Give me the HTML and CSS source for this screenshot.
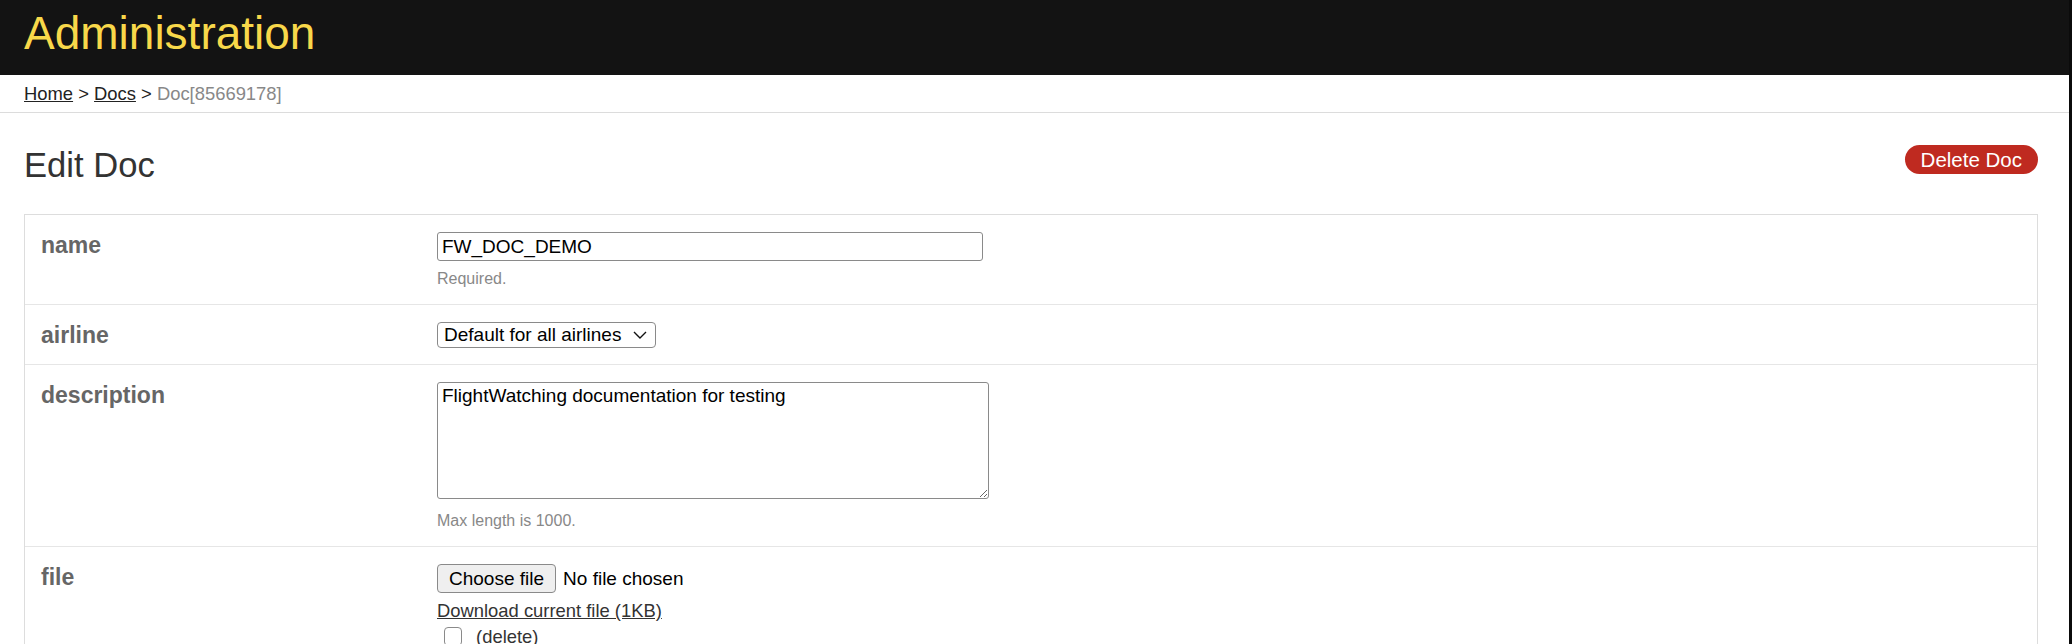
FILE: index.html
```html
<!DOCTYPE html>
<html>
<head>
    <link rel="stylesheet" href="styles.css">
</head>
<body>
    <div class="topbar">Administration</div>

    <div class="crumbs">
        <a href="#">Home</a> &gt; <a href="#">Docs</a> &gt; <span class="current">Doc[85669178]</span>
    </div>

    <div class="page">
        <div class="page-head">
            <h1>Edit Doc</h1>
            <button class="btn-delete">Delete Doc</button>
        </div>

        <form class="form-box">
            <div class="row">
                <label class="field-name" for="name">name</label>
                <div class="field-value">
                    <input type="text" id="name" class="text-input" value="FW_DOC_DEMO">
                    <div class="help">Required.</div>
                </div>
            </div>
            <div class="row">
                <label class="field-name" for="airline">airline</label>
                <div class="field-value">
                    <span class="select-wrap">
                        <select id="airline" class="select-input">
                            <option>Default for all airlines</option>
                        </select>
                        <svg class="chevron" width="14" height="8" viewBox="0 0 14 8"><path d="M1 1 L7 7 L13 1" fill="none" stroke="#111" stroke-width="1.4"/></svg>
                    </span>
                </div>
            </div>
            <div class="row">
                <label class="field-name" for="description">description</label>
                <div class="field-value">
                    <textarea id="description" class="text-area">FlightWatching documentation for testing</textarea>
                    <div class="help help-after-area">Max length is 1000.</div>
                </div>
            </div>
            <div class="row">
                <label class="field-name" for="file">file</label>
                <div class="field-value">
                    <div class="file-line">
                        <input type="file" id="file" class="file-input">
                        <label class="file-btn" for="file">Choose file</label>
                        <span class="file-status">No file chosen</span>
                    </div>
                    <div class="current-file"><a href="#">Download current file (1KB)</a></div>
                    <div class="delete-line"><input type="checkbox" class="check"> (delete)</div>
                </div>
            </div>
        </form>
    </div>
</body>
</html>
```

FILE: styles.css
```css
html {
    background-color: #0b0b0b;
}
body {
    margin: 0 3px 0 0;
    min-height: 100vh;
    background-color: white;
    color: #333;
    font-family: "Liberation Sans", Arial, sans-serif;
    font-size: 18.4px;
}
a {
    color: #222;
}
.topbar {
    background-color: #131313;
    color: #f8d84a;
    font-size: 46px;
    line-height: 46px;
    padding: 10px 24px 19px;
}
.crumbs {
    padding: 6px 24px;
    line-height: 25px;
    border-bottom: 1px solid #dcdcdc;
    color: #222;
}
.crumbs .current {
    color: #888;
}
.page {
    padding: 32px 31px 0 24px;
}
.page-head {
    display: flex;
    justify-content: space-between;
    align-items: flex-start;
    margin-bottom: 29px;
}
h1 {
    margin: 0;
    font-size: 34.6px;
    line-height: 40px;
    font-weight: normal;
    color: #333;
}
.btn-delete {
    background-color: #bf2a20;
    color: white;
    border: none;
    border-radius: 15px;
    height: 29px;
    padding: 0 16px;
    font-family: inherit;
    font-size: 20.5px;
    line-height: 29px;
    cursor: pointer;
}
.form-box {
    border: 1px solid #dddddd;
    border-bottom: none;
}
.row {
    display: grid;
    grid-template-columns: 412px 1fr;
    padding: 17px 0 15px;
    border-top: 1px solid #e6e6e6;
}
.row:first-child {
    border-top: none;
}
.field-name {
    padding-left: 16px;
    font-size: 23px;
    line-height: 27px;
    font-weight: bold;
    color: #666;
}
.text-input,
.select-input,
.text-area {
    display: block;
    box-sizing: border-box;
    font-family: inherit;
    font-size: 19px;
    color: #000;
    border: 1px solid #8a8a8a;
    border-radius: 3px;
    background-color: white;
}
.text-input {
    width: 546px;
    height: 29px;
    padding: 0 4px;
}
.help {
    margin-top: 7px;
    font-size: 16px;
    line-height: 21px;
    color: #888;
}
.help-after-area {
    margin-top: 11px;
}
.select-wrap {
    position: relative;
    display: inline-block;
    vertical-align: top;
}
.select-input {
    appearance: none;
    width: 219px;
    height: 26px;
    padding: 0 30px 0 6px;
    border-radius: 4px;
    line-height: 24px;
}
.chevron {
    position: absolute;
    right: 9px;
    top: 9px;
    pointer-events: none;
}
.text-area {
    width: 552px;
    height: 117px;
    padding: 2px 4px;
    resize: vertical;
    line-height: 22px;
}
.file-line {
    display: flex;
    align-items: center;
    gap: 7px;
    font-size: 19px;
    color: #000;
}
.file-input {
    display: none;
}
.file-btn {
    box-sizing: border-box;
    height: 29px;
    line-height: 27px;
    padding: 0 11px;
    border: 1px solid #8a8a8a;
    border-radius: 4px;
    background-color: #efefef;
    cursor: pointer;
}
.current-file {
    margin-top: 5px;
    line-height: 25px;
}
.current-file a {
    color: #333;
}
.delete-line {
    margin-top: 3px;
    line-height: 22px;
}
.check {
    appearance: none;
    width: 18px;
    height: 19px;
    margin: 0 9px 0 7px;
    border: 1px solid #8a8a8a;
    border-radius: 4px;
    background-color: white;
    vertical-align: -3px;
}
```
